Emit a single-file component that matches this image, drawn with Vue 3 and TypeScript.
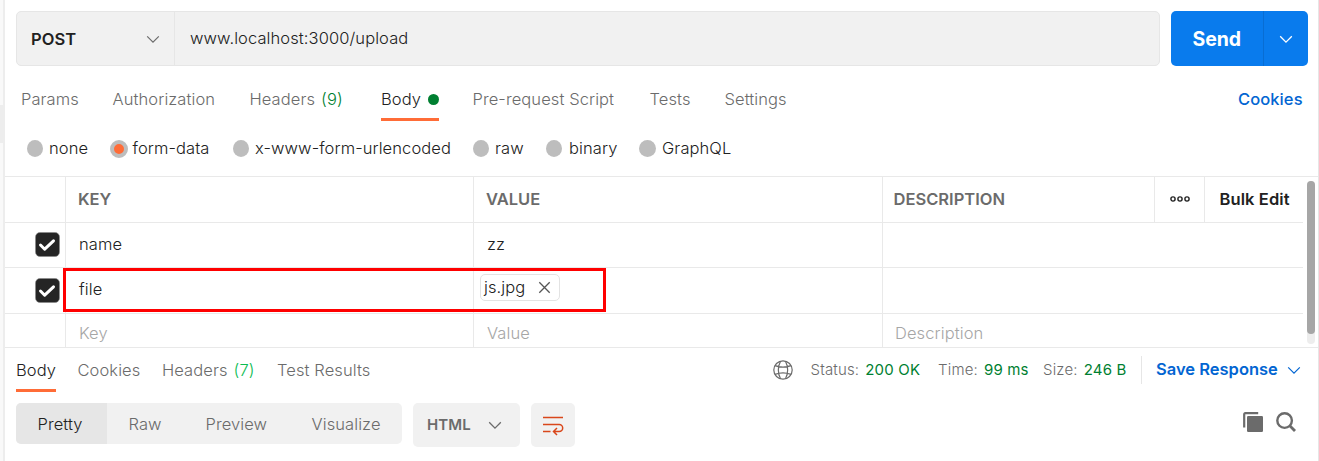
<script setup lang="ts">
interface Row { key: string; value: string; file?: boolean }

const tabs: { label: string; cls: string; count?: string; active?: boolean }[] = [
  { label: 'Params', cls: 't-params' },
  { label: 'Authorization', cls: 't-auth' },
  { label: 'Headers', cls: 't-headers', count: '(9)' },
  { label: 'Body', cls: 't-body', active: true },
  { label: 'Pre-request Script', cls: 't-pre' },
  { label: 'Tests', cls: 't-tests' },
  { label: 'Settings', cls: 't-settings' },
]
const modes = ['none', 'form-data', 'x-www-form-urlencoded', 'raw', 'binary', 'GraphQL']
const selectedMode = 'form-data'
const rows: Row[] = [
  { key: 'name', value: 'zz' },
  { key: 'file', value: 'js.jpg', file: true },
]
const views = ['Pretty', 'Raw', 'Preview', 'Visualize']
</script>

<template>
  <div class="app">
    <aside class="strip"><div class="strip-thumb"></div></aside>
    <main class="pane">
      <section class="request">
        <div class="urlbar">
          <div class="method">
            <span class="post">POST</span>
            <svg class="chev" width="14" height="9" viewBox="0 0 14 9"><path d="M1.2 1.3 7 7.1l5.800-5.800" fill="none" stroke="#6b6b6b" stroke-width="1.2" /></svg>
          </div>
          <div class="url"><span>www.localhost:3000/upload</span></div>
        </div>
        <div class="send">
          <div class="send-main"><span>Send</span></div>
          <div class="send-more">
            <svg width="14" height="9" viewBox="0 0 14 9"><path d="M1.200 1.300 7 7.100l5.800-5.800" fill="none" stroke="#fff" stroke-width="1.300" /></svg>
          </div>
        </div>
      </section>

      <nav class="tabs">
        <div v-for="t in tabs" :key="t.label" class="tab" :class="[t.cls, { active: t.active }]">
          <span class="label">{{ t.label }}</span>
          <span v-if="t.count" class="count">{{ t.count }}</span>
          <i v-if="t.active" class="dot"></i>
        </div>
        <div class="cookies"><span>Cookies</span></div>
      </nav>

      <div class="modes">
        <div v-for="m in modes" :key="m" class="mode" :class="'m-' + m.toLowerCase()">
          <i class="radio" :class="{ on: m === selectedMode }"></i>
          <span>{{ m }}</span>
        </div>
      </div>

      <section class="table">
        <div class="grid">
          <div class="tr head">
            <div class="td"></div>
            <div class="td"><span class="h-key">KEY</span></div>
            <div class="td"><span class="h-value">VALUE</span></div>
            <div class="td h-desc"><span>DESCRIPTION</span></div>
            <div class="td dots">
              <svg width="20" height="8" viewBox="0 0 20 8" fill="none" stroke="#212121" stroke-width="1.400"><circle cx="3" cy="4" r="2.100" /><circle cx="10" cy="4" r="2.100" /><circle cx="17" cy="4" r="2.100" /></svg>
            </div>
            <div class="td bulk"><span>Bulk Edit</span></div>
          </div>
          <div v-for="r in rows" :key="r.key" class="tr" :class="{ filerow: r.file }">
            <div class="td check">
              <svg width="25" height="25" viewBox="0 0 25 25"><rect x=".5" y=".5" width="24" height="24" rx="4.500" fill="#252525" stroke="#8a8a8a" stroke-width=".6" /><path d="m5.500 13 4.200 4.200 8.800-8.400" fill="none" stroke="#fff" stroke-width="3" stroke-linecap="round" stroke-linejoin="round" /></svg>
            </div>
            <div class="td"><span class="cell">{{ r.key }}</span></div>
            <div class="td">
              <span v-if="r.file" class="chip">
                <span class="fname">{{ r.value }}</span>
                <svg width="13" height="13" viewBox="0 0 13 13"><path d="m1.300 1.300 10.400 10.400m0-10.400L1.300 11.700" stroke="#555" stroke-width="1.300" /></svg>
              </span>
              <span v-else class="cell">{{ r.value }}</span>
            </div>
            <div class="td wide"></div>
          </div>
          <div class="tr placeholder">
            <div class="td"></div>
            <div class="td"><span class="p-key">Key</span></div>
            <div class="td"><span class="p-value">Value</span></div>
            <div class="td wide p-desc"><span>Description</span></div>
          </div>
        </div>
        <div class="scroll"><div class="thumb"></div></div>
        <div class="marker"></div>
      </section>

      <section class="response">
        <div class="rtab r-body active"><span>Body</span></div>
        <div class="rtab r-cookies"><span>Cookies</span></div>
        <div class="rtab r-headers"><span>Headers</span><span class="rcount">(7)</span></div>
        <div class="rtab r-tests"><span>Test Results</span></div>
        <svg class="globe" width="20" height="20" viewBox="0 0 20 20" fill="none" stroke="#6b6b6b" stroke-width="1.200"><circle cx="10" cy="10" r="9.200" /><path d="M7.500 1.200C4.900 6.500 4.900 13.500 7.500 18.800M12.500 1.200c2.600 5.300 2.600 12.300 0 17.600M2 5.600C6.500 7.300 13.500 7.300 18 5.600M2 14.400c4.500-1.700 11.500-1.700 16 0" /></svg>
        <div class="stat s-status"><span>Status:</span><b>200 OK</b></div>
        <div class="stat s-time"><span>Time:</span><b>99 ms</b></div>
        <div class="stat s-size"><span>Size:</span><b>246 B</b></div>
        <div class="save">
          <span>Save Response</span>
          <svg width="14" height="9" viewBox="0 0 14 9"><path d="M1.200 1.300 7 7.100l5.800-5.800" fill="none" stroke="#0265d2" stroke-width="1.200" /></svg>
        </div>
      </section>

      <section class="toolbar">
        <div class="views">
          <div v-for="(v, i) in views" :key="v" class="view" :class="{ current: i === 0 }"><span>{{ v }}</span></div>
        </div>
        <div class="lang">
          <span>HTML</span>
          <svg width="14" height="9" viewBox="0 0 14 9"><path d="M1.200 1.300 7 7.100l5.800-5.800" fill="none" stroke="#6b6b6b" stroke-width="1.300" /></svg>
        </div>
        <div class="wrap">
          <svg width="22" height="22" viewBox="0 0 22 22" fill="none" stroke="#d9471b" stroke-width="1.500"><path d="M1 3.500h20M1 10.500h16.200a3.500 3.500 0 0 1 0 7H12M1 17.500h7.500M15 14l-3.500 3.500L15 21" /></svg>
        </div>
        <div class="tools">
          <svg width="20" height="20" viewBox="0 0 20 20"><path d="M1.200 15.500V2.200a1 1 0 0 1 1-1h13" fill="none" stroke="#6b6b6b" stroke-width="2.200" /><rect x="4" y="4" width="16" height="16" rx="1.200" fill="#6b6b6b" /></svg>
          <svg width="20" height="20" viewBox="0 0 20 20" fill="none" stroke="#6b6b6b" stroke-width="2.400"><circle cx="8.600" cy="8.600" r="7.300" /><path d="m13.800 13.800 5.200 5.200" stroke-width="2.800" /></svg>
        </div>
      </section>
    </main>
  </div>
</template>

<style>
body { margin: 0; background: #fff; overflow: hidden; }
</style>

<style scoped>
* { box-sizing: border-box; }
.app { display: flex; width: 1319px; height: 461px; font: 360 16.5px/20px Inter, "Noto Sans", sans-serif; letter-spacing: .09px; color: #212121; white-space: nowrap; }
.app svg { display: block; flex: none; }
.strip { width: 5px; padding-top: 105px; background: #f9f9f9; border-right: 2px solid #ededed; }
.strip-thumb { height: 38px; background: #ededed; }
.pane { width: 1314px; border-right: 1px solid #e6e6e6; overflow: hidden; }

.request { display: flex; gap: 11px; height: 66px; padding: 11px 0 0 11px; }
.urlbar { display: flex; width: 1144px; height: 55px; background: #f1f1f1; border: 1px solid #e6e6e6; border-radius: 5px; }
.method { display: flex; align-items: center; justify-content: space-between; width: 158px; padding: 1px 14px 0 14px; border-right: 1px solid #e6e6e6; font-weight: 600; }
.url { padding: 16px 0 0 15px; }
.send { display: flex; width: 137px; height: 55px; background: #097bed; border-radius: 5px; color: #fff; font-size: 19.5px; font-weight: 650; letter-spacing: -.1px; }
.send-main { width: 93px; padding: 18px 0 0 21.5px; border-right: 1px solid #086dd3; }
.send-more { display: flex; align-items: center; padding: 1px 0 0 15px; }

.tabs { display: grid; grid-template-columns: 91.5px 137px 131.500px 91.500px 177px 75px 513.500px 65px; height: 55px; padding: 23px 0 0 16px; color: #6b6b6b; }
.tab { display: flex; height: 32px; }
.count { margin-left: 6px; color: #007f31; }
.t-body { width: 58px; border-bottom: 3px solid #ff6c37; color: #212121; justify-content: space-between; }
.dot { width: 11px; height: 11px; margin-top: 5px; border-radius: 50%; background: #007f31; }
.cookies { color: #0265d2; font-weight: 550; }

.modes { display: grid; grid-template-columns: 83px 123px 240px 73px 93px 120px; height: 55px; padding: 17px 0 0 22px; }
.mode { display: flex; }
.mode span { margin-left: 6px; }
.m-binary span, .m-graphql span { margin-left: 7px; }
.radio { width: 16px; height: 17px; margin-top: 2px; border-radius: 50%; background: #bdbdbd; }
.m-graphql .radio { width: 17px; }
.mode.m-graphql span { margin-left: 6px; }
.radio.on { width: 18px; height: 18px; background: #ff6c37; border: 4px solid #bdbdbd; }
.mode .radio.on + span { margin-left: 4.5px; }

.table { position: relative; display: flex; height: 172px; border-top: 1px solid #e9e9e9; border-bottom: 1px solid #e9e9e9; }
.grid { width: 1298px; }
.tr { display: grid; grid-template-columns: 61px 408px 409px 272px 50px 98px; height: 45px; border-bottom: 1px solid #e9e9e9; }
.tr.head { height: 46px; color: #6b6b6b; font-weight: 560; letter-spacing: 0; }
.tr.filerow { height: 46px; }
.tr.placeholder { height: 33px; border: 0; color: #a6a6a6; }
.td { padding: 12px 0 0 12px; border-right: 1px solid #e9e9e9; }
.td:last-child { border-right: 0; }
.td.wide { grid-column: span 3; }
.tr .cell { margin-left: 1px; }
.tr:not(.head) .td { padding-top: 11px; }
.tr.placeholder .td { padding: 9px 0 0 13px; }
.tr.placeholder .p-desc { padding-left: 12px; }
.tr.head .h-desc { padding-left: 10.5px; }
.tr .td.check { padding: 9px 0 0 30px; }
.tr.filerow .td.check { padding-top: 10px; }
.td.dots { padding: 18px 0 0 15px; }
.td.bulk { padding-left: 14.5px; color: #212121; letter-spacing: .1px; }
.tr.filerow .td:nth-child(3) { padding: 6px 0 0 6px; }
.chip { display: flex; align-items: center; justify-content: space-between; width: 80px; height: 27px; padding: 0 8px 0 3px; border: 1px solid #e3e3e3; border-radius: 5px; }
.fname { margin-top: -1px; }
.scroll { width: 8px; height: 163px; margin: 4px 0 0 4px; border-radius: 4px; background: #ededed; }
.thumb { height: 153px; border-radius: 4px; background: #a6a6a6; }
.marker { position: absolute; left: 58px; top: 91px; width: 543px; height: 44px; border: 3px solid #f00; }

.response { display: grid; grid-template-columns: 61.5px 84.500px 115px 496px 37.500px 127.500px 105px 98px 172px; height: 55px; padding: 12px 0 0 11px; color: #6b6b6b; }
.rtab { height: 32px; }
.r-body { width: 40px; border-bottom: 3px solid #ff6c37; color: #212121; }
.rcount { margin-left: 6px; color: #0cbb52; }
.stat { font-size: 15px; letter-spacing: .17px; }
.stat b { margin-left: 6px; font-weight: 370; color: #007f31; }
.save { display: flex; justify-content: space-between; height: 28px; margin-top: -4px; padding: 3px 12px 0 14px; border-left: 1px solid #e6e6e6; color: #0265d2; font-weight: 600; letter-spacing: 0; }
.save svg { margin-top: 7px; }

.toolbar { display: flex; padding-left: 11px; color: #6b6b6b; }
.views { display: grid; grid-template-columns: 91px 77px 106px 112px; width: 386px; height: 41px; border-radius: 5px; background: #f1f1f1; overflow: hidden; }
.view { padding: 11px 0 0 21.5px; }
.view.current { background: #e6e6e6; color: #212121; }
.lang { display: flex; align-items: center; justify-content: space-between; width: 107px; height: 44px; margin-left: 11px; padding: 0 18px 0 14px; border-radius: 5px; background: #f1f1f1; font-weight: 600; font-size: 15px; }
.wrap { width: 44px; height: 44px; margin-left: 11px; padding: 11px; border-radius: 5px; background: #f1f1f1; }
.tools { display: flex; gap: 13px; margin: 9px 0 0 668px; }
</style>
